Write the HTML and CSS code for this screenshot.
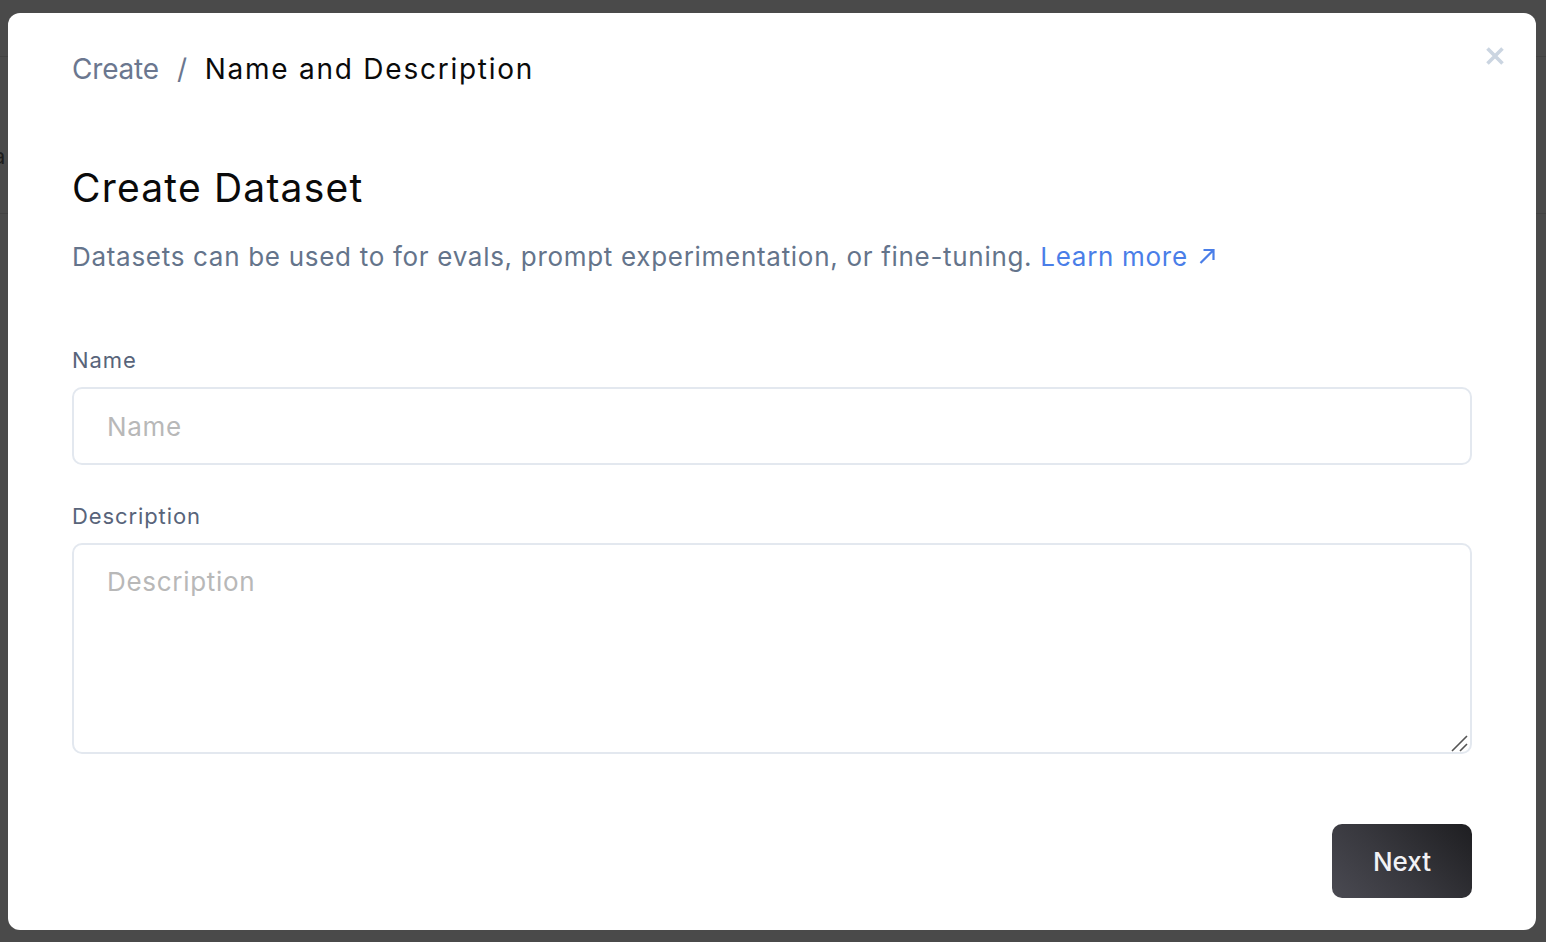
FILE: index.html
```html
<!DOCTYPE html>
<html lang="en">
<head>
<meta charset="utf-8">
<title>Create Dataset</title>
<link rel="stylesheet" href="styles.css">
</head>
<body>
<div class="underlay">
  <div class="under-top"></div>
  <div class="under-row"><span class="under-letter">a</span></div>
</div>
<div class="overlay">
  <div class="modal">
    <button class="close" aria-label="Close">
      <svg width="22" height="22" viewBox="0 0 22 22"><path d="M3.5 3.5L18.5 18.5M18.5 3.5L3.5 18.5" stroke="#cbd5e1" stroke-width="3.6" stroke-linecap="butt"/></svg>
    </button>
    <nav class="crumbs">
      <span class="crumb-muted">Create</span>
      <span class="crumb-sep">/</span>
      <span class="crumb-current">Name and Description</span>
    </nav>
    <h1 class="title">Create Dataset</h1>
    <p class="lede">Datasets can be used to for evals, prompt experimentation, or fine-tuning. <a class="link" href="#">Learn more <svg class="ext" width="18" height="18" viewBox="0 0 18 18"><path d="M2.5 16L15 3.5M5.5 3H15.5V13" fill="none" stroke="#4a7ee8" stroke-width="2.2"/></svg></a></p>
    <label class="label label-name">Name</label>
    <input class="field" type="text" placeholder="Name">
    <label class="label label-desc">Description</label>
    <div class="area-wrap">
      <textarea class="field area" placeholder="Description"></textarea>
      <svg class="grip" width="18" height="18" viewBox="0 0 18 18"><path d="M1 17L16 2M9 17L16 10" stroke="#555" stroke-width="1.6" fill="none"/></svg>
    </div>
    <div class="actions">
      <button class="next">Next</button>
    </div>
  </div>
</div>
</body>
</html>
```
FILE: styles.css
```css
* { box-sizing: border-box; }
html, body { margin: 0; padding: 0; }
body {
  width: 1546px;
  height: 942px;
  overflow: hidden;
  background: #ffffff;
  font-family: Inter, "Noto Sans", sans-serif;
}
.underlay { height: 942px; }
.under-top { height: 57px; border-bottom: 1px solid #e3e3e3; }
.under-row { height: 157px; border-bottom: 1px solid #e3e3e3; position: relative; }
.under-letter { position: absolute; left: -7px; top: 86px; font-size: 22px; color: #666; }
.overlay {
  position: fixed;
  inset: 0;
  background: rgba(0, 0, 0, 0.71);
  padding: 13px 10px 12px 8px;
}
.modal {
  position: relative;
  height: 917px;
  background: #ffffff;
  border-radius: 12px;
  padding: 38px 64px 32px 64px;
  display: flex;
  flex-direction: column;
}
.close {
  position: absolute;
  top: 32px;
  right: 30px;
  width: 22px;
  height: 22px;
  padding: 0;
  border: 0;
  background: none;
  display: flex;
}
.crumbs {
  display: flex;
  align-items: center;
  gap: 18px;
  font-size: 28px;
  line-height: 36px;
  letter-spacing: -0.2px;
}
.crumb-muted { color: #6b778f; }
.crumb-sep { color: #6b778f; }
.crumb-current { color: #0a0a0a; letter-spacing: 1.75px; }
.title {
  margin: 77px 0 0 0;
  font-size: 39px;
  line-height: 48px;
  font-weight: 400;
  color: #0a0a0a;
  letter-spacing: 1.2px;
}
.lede {
  margin: 27px 0 0 0;
  font-size: 26px;
  line-height: 36px;
  color: #64748b;
  letter-spacing: 0.7px;
}
.link { color: #4a7ee8; text-decoration: none; }
.ext { vertical-align: 1px; margin-left: 2px; }
.label {
  display: block;
  font-size: 22px;
  line-height: 30px;
  color: #58647a;
  letter-spacing: 0.9px;
}
.label-name { margin-top: 70px; }
.label-desc { margin-top: 36px; }
.field {
  display: block;
  margin-top: 12px;
  width: 100%;
  height: 79px;
  border: 2px solid #e3e8ef;
  border-radius: 10px;
  padding: 0 33px;
  font-family: inherit;
  font-size: 26px;
  letter-spacing: 0.7px;
  color: #222;
  outline: none;
  background: #fff;
}
.field::placeholder { color: #b8b8b8; }
.area-wrap {
  position: relative;
  margin-top: 12px;
}
.area {
  margin-top: 0;
  height: 211px;
  padding: 18px 33px;
  line-height: 38px;
  resize: none;
}
.grip {
  position: absolute;
  right: 3px;
  bottom: 2px;
}
.actions {
  margin-top: 70px;
  display: flex;
  justify-content: flex-end;
}
.next {
  width: 140px;
  height: 74px;
  border: 0;
  border-radius: 10px;
  background: linear-gradient(225deg, #1e1e21 0%, #38383e 55%, #4a4a52 100%);
  color: #f2f2f5;
  font-family: inherit;
  font-size: 26px;
  font-weight: 500;
}
```
